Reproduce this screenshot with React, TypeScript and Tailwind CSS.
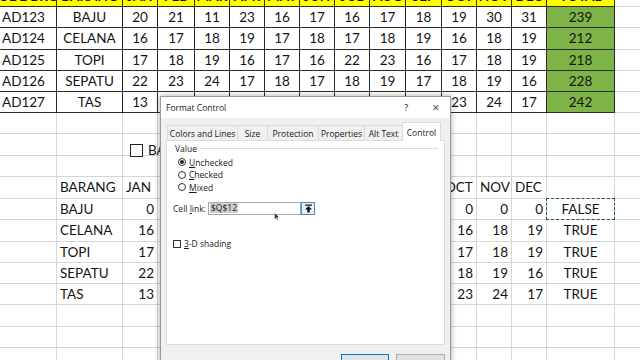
import React from 'react';

type Cell = {
  text?: string;
  align?: 'left' | 'center' | 'right';
  bold?: boolean;
  fill?: string;
  line: 'table' | 'grid';
  marquee?: boolean;
};

// widths of the sheet columns, col A starts off-screen
const COL_W = [
  'w-[66px]', 'w-[66px]',
  'w-[35px]', 'w-[37px]', 'w-[35px]', 'w-[35px]', 'w-[35px]', 'w-[35px]',
  'w-[35px]', 'w-[36px]', 'w-[36px]', 'w-[35px]', 'w-[35px]', 'w-[35px]',
  'w-[68px]', 'w-[64px]',
];

const ROW_H = [
  'h-[21px]', 'h-[21px]', 'h-[22px]', 'h-[21px]', 'h-[21px]', 'h-[21px]',
  'h-[21px]', 'h-[22px]', 'h-[21px]', 'h-[22px]', 'h-[21px]', 'h-[22px]',
  'h-[21px]', 'h-[21px]', 'h-[21px]', 'h-[22px]', 'h-[21px]', 'h-[21px]',
];

const MONTHS = ['JAN', 'FEB', 'MAR', 'APR', 'MAY', 'JUN', 'JUL', 'AUG', 'SEP', 'OCT', 'NOV', 'DEC'];

const ITEMS = [
  { code: 'AD123', name: 'BAJU', sales: [20, 21, 11, 23, 16, 17, 16, 17, 18, 19, 30, 31], on: false },
  { code: 'AD124', name: 'CELANA', sales: [16, 17, 18, 19, 17, 18, 17, 18, 19, 16, 18, 19], on: true },
  { code: 'AD125', name: 'TOPI', sales: [17, 18, 19, 16, 17, 16, 22, 23, 16, 17, 18, 19], on: true },
  { code: 'AD126', name: 'SEPATU', sales: [22, 23, 24, 17, 18, 17, 18, 19, 17, 18, 19, 16], on: true },
  { code: 'AD127', name: 'TAS', sales: [13, 22, 22, 21, 19, 21, 21, 20, 19, 23, 24, 17], on: true },
];

const YELLOW = 'bg-[#ffff00]';
const GREEN = 'bg-[#7db347]';

function emptyRow(): Cell[] {
  return COL_W.map(() => ({ line: 'grid' as const }));
}

function buildRows(): Cell[][] {
  const rows: Cell[][] = [];

  // top table
  rows.push([
    { text: 'KODE BRG', bold: true, fill: YELLOW, line: 'table' },
    { text: 'BARANG', bold: true, fill: YELLOW, line: 'table' },
    ...MONTHS.map((m) => ({ text: m, bold: true, fill: YELLOW, line: 'table' as const })),
    { text: 'TOTAL', bold: true, fill: YELLOW, line: 'table' },
    { line: 'grid' },
  ]);
  ITEMS.forEach((it) => {
    rows.push([
      { text: it.code, line: 'table' },
      { text: it.name, line: 'table' },
      ...it.sales.map((v) => ({ text: String(v), line: 'table' as const })),
      { text: String(it.sales.reduce((a, b) => a + b, 0)), fill: GREEN, line: 'table' },
      { line: 'grid' },
    ]);
  });

  rows.push(emptyRow(), emptyRow(), emptyRow());

  // linked table
  rows.push([
    { line: 'grid' },
    { text: 'BARANG', align: 'left', line: 'grid' },
    ...MONTHS.map((m) => ({ text: m, align: 'left' as const, line: 'grid' as const })),
    { line: 'grid' },
    { line: 'grid' },
  ]);
  ITEMS.forEach((it) => {
    rows.push([
      { line: 'grid' },
      { text: it.name, align: 'left', line: 'grid' },
      ...it.sales.map((v) => ({ text: String(it.on ? v : 0), align: 'right' as const, line: 'grid' as const })),
      { text: it.on ? 'TRUE' : 'FALSE', line: 'grid', marquee: !it.on },
      { line: 'grid' },
    ]);
  });

  rows.push(emptyRow(), emptyRow(), emptyRow());
  return rows;
}

function SheetCell({ cell, width }: { cell: Cell; width: string }) {
  const align =
    cell.align === 'left' ? 'justify-start pl-[3px]' : cell.align === 'right' ? 'justify-end pr-[3px]' : 'justify-center';
  const line = cell.line === 'table' ? 'border-[#2b2b2b]' : 'border-[#d6d6d6]';
  return (
    <div
      className={`${width} ${line} ${cell.fill ?? ''} ${align} ${
        cell.bold ? 'font-bold items-end' : 'items-center'
      } relative shrink-0 flex border-r border-b whitespace-nowrap`}
    >
      {cell.text}
      {cell.marquee && (
        <div className="absolute -left-px -top-px -right-px -bottom-px border-[1.5px] border-dashed border-[#1f5c3c]" />
      )}
    </div>
  );
}

function RangeIcon() {
  return (
    <svg width="9" height="9" viewBox="0 0 9 9">
      <rect x="1" y="0.5" width="7" height="1.2" fill="#111" />
      <path d="M4.5 2 L8 5.5 L5.7 5.5 L5.7 8.5 L3.3 8.5 L3.3 5.5 L1 5.5 Z" fill="#111" />
    </svg>
  );
}

function Radio({ checked, label }: { checked?: boolean; label: string }) {
  return (
    <div className="flex items-center h-[12.5px] gap-[3px]">
      <span className="w-[8px] h-[8px] rounded-full border border-[#333] bg-white flex items-center justify-center">
        {checked && <span className="w-[4px] h-[4px] rounded-full bg-[#222]" />}
      </span>
      <span className="inline-block leading-[11px] first-letter:underline">{label}</span>
    </div>
  );
}

function FormatControlDialog() {
  const tabs = [
    { label: 'Colors and Lines', w: 'w-[70px]' },
    { label: 'Size', w: 'w-[30px]' },
    { label: 'Protection', w: 'w-[51px]' },
    { label: 'Properties', w: 'w-[46px]' },
    { label: 'Alt Text', w: 'w-[38px]' },
  ];
  return (
    <div
      className="absolute left-[160px] top-[96px] w-[291px] h-[290px] border border-[#9a9a9a] bg-[#f0f0f0] shadow-[0_0_6px_rgba(0,0,0,0.35)] text-[8.5px] leading-[11px] text-[#1a1a1a]"
      style={{ fontFamily: '"Open Sans", "Noto Sans", sans-serif' }}
    >
      {/* title bar */}
      <div className="h-[21px] bg-white flex items-center pl-[5px]">
        <span>Format Control</span>
        <span className="ml-auto mr-[24px] text-[9px]">?</span>
        <span className="mr-[11px] text-[12px] leading-none text-[#333]">×</span>
      </div>

      <div className="px-[5px] pt-[4px]">
        {/* tabs */}
        <div className="flex items-end h-[18px] pl-[1px]">
          {tabs.map((t) => (
            <div
              key={t.label}
              className={`${t.w} h-[15px] flex items-center justify-center border border-b-0 border-r-0 border-[#dcdcdc] bg-[#f0f0f0] whitespace-nowrap`}
            >
              {t.label}
            </div>
          ))}
          <div className="w-[39px] h-[19px] -mb-px relative z-10 flex items-center justify-center border border-b-0 border-[#dcdcdc] bg-white">
            Control
          </div>
        </div>

        {/* panel */}
        <div className="h-[205px] bg-white border border-[#dcdcdc] px-[6px] pt-[2px]">
          <div className="flex items-center h-[10px] gap-[3px]">
            <span className="ml-[2px]">Value</span>
            <div className="flex-1 h-px bg-[#dcdcdc]" />
          </div>
          <div className="ml-[5px] mt-[3px] flex flex-col">
            <Radio checked label="Unchecked" />
            <Radio label="Checked" />
            <Radio label="Mixed" />
          </div>

          <div className="mt-[8px] flex items-center h-[13px]">
            <span className="w-[35px] shrink-0">
              Cell <span className="underline">l</span>ink:
            </span>
            <div className="w-[93px] h-[13px] border border-[#a8a8a8] bg-white flex items-center pl-[1px]">
              <span className="bg-[#cfcfcf] px-[1px] leading-[10px]">$Q$12</span>
            </div>
            <div className="w-[14px] h-[13px] border border-[#4f86c0] bg-[#e5f1fb] flex items-center justify-center">
              <RangeIcon />
            </div>
          </div>

          <div className="mt-[24px] flex items-center h-[10px] gap-[3px]">
            <span className="w-[8px] h-[8px] border border-[#333] bg-white" />
            <span className="inline-block first-letter:underline">3-D shading</span>
          </div>
        </div>

        {/* buttons */}
        <div className="flex justify-end gap-[7px] pt-[9px]">
          <div className="w-[48px] h-[22px] border border-[#0078d7] bg-[#e1e1e1] flex items-center justify-center">
            OK
          </div>
          <div className="w-[49px] h-[22px] border border-[#adadad] bg-[#e1e1e1] flex items-center justify-center">
            Cancel
          </div>
        </div>
      </div>
    </div>
  );
}

export default function App() {
  const rows = buildRows();
  return (
    <div
      className="relative w-[640px] h-[360px] overflow-hidden bg-white text-[13.5px] text-[#141414]"
      style={{ fontFamily: 'Lato, "Open Sans", sans-serif' }}
    >
      <div className="-mt-[14px] -ml-[9px] flex flex-col">
        {rows.map((row, r) => (
          <div key={r} className={`${ROW_H[r]} flex shrink-0`}>
            {row.map((cell, c) => (
              <SheetCell key={c} cell={cell} width={COL_W[c]} />
            ))}
          </div>
        ))}
      </div>

      {/* check box form control on the sheet */}
      <div className="absolute left-[130px] top-[140px] flex items-center gap-[5px]">
        <span className="w-[13px] h-[13px] border-[1.5px] border-[#222] bg-white" />
        <span>BAJU</span>
      </div>

      <FormatControlDialog />

      {/* mouse pointer */}
      <svg className="absolute left-[274px] top-[212px]" width="6" height="9" viewBox="0 0 6 9">
        <path d="M0.5 0.5 L0.5 7.5 L2.2 6 L3.4 8.5 L4.4 8 L3.3 5.6 L5.5 5.5 Z" fill="#3a2b4a" stroke="#fff" strokeWidth="0.5" />
      </svg>
    </div>
  );
}
